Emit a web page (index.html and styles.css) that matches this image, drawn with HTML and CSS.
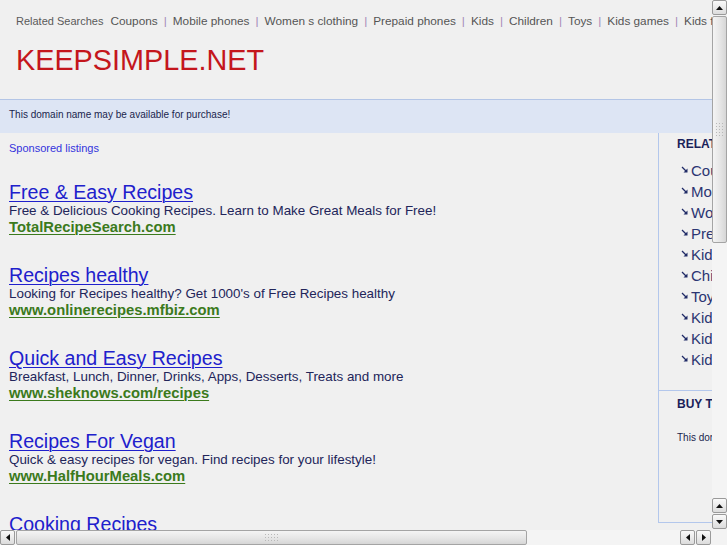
FILE: index.html
```
<!DOCTYPE html>
<html>
<head>
<meta charset="utf-8">
<title>KEEPSIMPLE.NET</title>
<link rel="stylesheet" href="styles.css">
</head>
<body>
<div class="page">
  <div class="topnav">
    <span class="rs">Related Searches</span>
    <a href="#">Coupons</a><span class="sep">|</span>
    <a href="#">Mobile phones</a><span class="sep">|</span>
    <a href="#">Women s clothing</a><span class="sep">|</span>
    <a href="#">Prepaid phones</a><span class="sep">|</span>
    <a href="#">Kids</a><span class="sep">|</span>
    <a href="#">Children</a><span class="sep">|</span>
    <a href="#">Toys</a><span class="sep">|</span>
    <a href="#">Kids games</a><span class="sep">|</span>
    <a href="#">Kids fashion</a>
  </div>
  <div class="logo">KEEPSIMPLE.NET</div>
  <div class="band">This domain name may be available for purchase!</div>
  <div class="main">
    <div class="listings">
      <div class="sponsored">Sponsored listings</div>
      <div class="ad">
        <a class="ad-title" href="#">Free &amp; Easy Recipes</a>
        <div class="ad-desc">Free &amp; Delicious Cooking Recipes. Learn to Make Great Meals for Free!</div>
        <a class="ad-url" href="#">TotalRecipeSearch.com</a>
      </div>
      <div class="ad">
        <a class="ad-title" href="#">Recipes healthy</a>
        <div class="ad-desc">Looking for Recipes healthy? Get 1000's of Free Recipes healthy</div>
        <a class="ad-url" href="#">www.onlinerecipes.mfbiz.com</a>
      </div>
      <div class="ad">
        <a class="ad-title" href="#">Quick and Easy Recipes</a>
        <div class="ad-desc">Breakfast, Lunch, Dinner, Drinks, Apps, Desserts, Treats and more</div>
        <a class="ad-url" href="#">www.sheknows.com/recipes</a>
      </div>
      <div class="ad">
        <a class="ad-title" href="#">Recipes For Vegan</a>
        <div class="ad-desc">Quick &amp; easy recipes for vegan. Find recipes for your lifestyle!</div>
        <a class="ad-url" href="#">www.HalfHourMeals.com</a>
      </div>
      <div class="ad">
        <a class="ad-title" href="#">Cooking Recipes</a>
        <div class="ad-desc">Find Cooking Recipes. Browse thousands of recipes online.</div>
        <a class="ad-url" href="#">www.recipes.com</a>
      </div>
    </div>
    <aside class="side">
      <div class="side-box related">
        <div class="side-h">RELATED SEARCHES</div>
        <ul class="rel-list">
          <li><svg class="arr" width="7" height="7" viewBox="0 0 7 7"><path d="M1 1L5 5" stroke="#1f2a66" stroke-width="1.2"/><path d="M6.5 6.5H2.5L6.5 2.5Z" fill="#1f2a66"/></svg><a href="#">Coupons</a></li>
          <li><svg class="arr" width="7" height="7" viewBox="0 0 7 7"><path d="M1 1L5 5" stroke="#1f2a66" stroke-width="1.2"/><path d="M6.5 6.5H2.5L6.5 2.5Z" fill="#1f2a66"/></svg><a href="#">Mobile phones</a></li>
          <li><svg class="arr" width="7" height="7" viewBox="0 0 7 7"><path d="M1 1L5 5" stroke="#1f2a66" stroke-width="1.2"/><path d="M6.5 6.5H2.5L6.5 2.5Z" fill="#1f2a66"/></svg><a href="#">Women s clothing</a></li>
          <li><svg class="arr" width="7" height="7" viewBox="0 0 7 7"><path d="M1 1L5 5" stroke="#1f2a66" stroke-width="1.2"/><path d="M6.5 6.5H2.5L6.5 2.5Z" fill="#1f2a66"/></svg><a href="#">Prepaid phones</a></li>
          <li><svg class="arr" width="7" height="7" viewBox="0 0 7 7"><path d="M1 1L5 5" stroke="#1f2a66" stroke-width="1.2"/><path d="M6.5 6.5H2.5L6.5 2.5Z" fill="#1f2a66"/></svg><a href="#">Kids</a></li>
          <li><svg class="arr" width="7" height="7" viewBox="0 0 7 7"><path d="M1 1L5 5" stroke="#1f2a66" stroke-width="1.2"/><path d="M6.5 6.5H2.5L6.5 2.5Z" fill="#1f2a66"/></svg><a href="#">Children</a></li>
          <li><svg class="arr" width="7" height="7" viewBox="0 0 7 7"><path d="M1 1L5 5" stroke="#1f2a66" stroke-width="1.2"/><path d="M6.5 6.5H2.5L6.5 2.5Z" fill="#1f2a66"/></svg><a href="#">Toys</a></li>
          <li><svg class="arr" width="7" height="7" viewBox="0 0 7 7"><path d="M1 1L5 5" stroke="#1f2a66" stroke-width="1.2"/><path d="M6.5 6.5H2.5L6.5 2.5Z" fill="#1f2a66"/></svg><a href="#">Kids games</a></li>
          <li><svg class="arr" width="7" height="7" viewBox="0 0 7 7"><path d="M1 1L5 5" stroke="#1f2a66" stroke-width="1.2"/><path d="M6.5 6.5H2.5L6.5 2.5Z" fill="#1f2a66"/></svg><a href="#">Kids fashion</a></li>
          <li><svg class="arr" width="7" height="7" viewBox="0 0 7 7"><path d="M1 1L5 5" stroke="#1f2a66" stroke-width="1.2"/><path d="M6.5 6.5H2.5L6.5 2.5Z" fill="#1f2a66"/></svg><a href="#">Kids toys</a></li>
        </ul>
      </div>
      <div class="side-box buy">
        <div class="side-h">BUY THIS DOMAIN</div>
        <p class="buy-text">This domain may be for sale by its owner!</p>
      </div>
    </aside>
  </div>
</div>

<div class="vscroll">
  <div class="sb-btn"><svg width="7" height="4" viewBox="0 0 7 4"><path d="M0 4L3.5 0L7 4Z" fill="#111"/></svg></div>
  <div class="v-thumb"><span class="grip"></span></div>
  <div class="sb-track"></div>
  <div class="sb-btn"><svg width="7" height="4" viewBox="0 0 7 4"><path d="M0 4L3.5 0L7 4Z" fill="#111"/></svg></div>
  <div class="sb-btn"><svg width="7" height="4" viewBox="0 0 7 4"><path d="M0 0L3.5 4L7 0Z" fill="#111"/></svg></div>
</div>
<div class="hscroll">
  <div class="sb-btn"><svg width="4" height="7" viewBox="0 0 4 7"><path d="M4 0L0 3.5L4 7Z" fill="#111"/></svg></div>
  <div class="h-thumb"><span class="grip"></span></div>
  <div class="sb-track"></div>
  <div class="sb-btn"><svg width="4" height="7" viewBox="0 0 4 7"><path d="M4 0L0 3.5L4 7Z" fill="#111"/></svg></div>
  <div class="sb-btn"><svg width="4" height="7" viewBox="0 0 4 7"><path d="M0 0L4 3.5L0 7Z" fill="#111"/></svg></div>
</div>
<div class="sb-corner"></div>
</body>
</html>
```

FILE: styles.css
```
html, body {
  margin: 0;
  padding: 0;
  overflow: hidden;
  background: #f0f0f0;
}

body {
  font-family: "Liberation Sans", Arial, Helvetica, sans-serif;
  color: #1f2a5e;
}

a {
  text-decoration: none;
}

.page {
  width: 920px;
}

/* top related searches */
.topnav {
  display: flex;
  align-items: baseline;
  white-space: nowrap;
  padding: 13px 0 0 16px;
  height: 17px;
  line-height: 16px;
  font-size: 11.8px;
  color: #5a5a5a;
}

.topnav .rs {
  font-size: 11px;
  color: #5a5a5a;
  margin-right: 7px;
}

.topnav a {
  color: #555;
}

.topnav .sep {
  color: #a58ab8;
  margin: 0 6px;
}

.logo {
  padding: 13px 0 0 16px;
  height: 56px;
  line-height: 34px;
  font-size: 28.8px;
  color: #c4161c;
}

.band {
  border-top: 1px solid #b3c5e6;
  background: #dde5f4;
  height: 33px;
  line-height: 30px;
  padding-left: 9px;
  font-size: 10px;
  color: #1a1f4d;
}

.main {
  display: flex;
  align-items: flex-start;
}

.listings {
  width: 649px;
  padding: 8px 0 0 9px;
  flex: none;
}

.sponsored {
  font-size: 11px;
  line-height: 14px;
  color: #3333dd;
  margin-bottom: 27px;
}

.ad {
  height: 83px;
}

.ad-title {
  display: block;
  width: max-content;
  font-size: 19.6px;
  line-height: 20px;
  color: #2020cc;
  text-decoration: underline;
  text-decoration-thickness: 1px;
  text-underline-offset: 2px;
}

.ad-desc {
  font-size: 13.4px;
  line-height: 17px;
  color: #22255a;
  white-space: nowrap;
}

.ad-url {
  display: block;
  width: max-content;
  font-size: 14.8px;
  line-height: 17px;
  font-weight: bold;
  color: #3b7a1c;
  text-decoration: underline;
  text-decoration-thickness: 1px;
  text-underline-offset: 2px;
}

/* sidebar */
.side {
  width: 240px;
  flex: none;
  border-left: 1px solid #b3c7ec;
  border-bottom: 1px solid #b3c7ec;
}

.side-box {
  padding-left: 18px;
}

.related {
  height: 258px;
  padding-top: 4px;
  border-bottom: 1px solid #b3c7ec;
  box-sizing: border-box;
}

.side-h {
  font-size: 12px;
  line-height: 14px;
  font-weight: bold;
  color: #1a1f5a;
  white-space: nowrap;
}

.rel-list {
  list-style: none;
  margin: 9px 0 0 0;
  padding: 0 0 0 4px;
}

.rel-list li {
  display: flex;
  align-items: center;
  height: 21px;
  white-space: nowrap;
}

.rel-list .arr {
  margin-right: 3px;
  margin-top: -3px;
}

.rel-list a {
  font-size: 15px;
  color: #2b3572;
}

.buy {
  height: 131px;
  padding-top: 6px;
  box-sizing: border-box;
}

.buy-text {
  margin: 21px 0 0 0;
  font-size: 10px;
  line-height: 12px;
  color: #1a1f4d;
  white-space: nowrap;
}

/* scrollbars drawn over the page */
.vscroll, .hscroll {
  position: fixed;
  display: flex;
  background: #f3f3f3;
}

.vscroll {
  top: 0;
  right: 0;
  width: 15px;
  height: 530px;
  flex-direction: column;
}

.hscroll {
  left: 0;
  bottom: 0;
  height: 15px;
  width: 712px;
  flex-direction: row;
}

.sb-corner {
  position: fixed;
  right: 0;
  bottom: 0;
  width: 15px;
  height: 15px;
  background: #f3f3f3;
}

.sb-btn {
  width: 13px;
  height: 13px;
  flex: none;
  margin: 0 0 1px 0;
  border: 1px solid #9a9a9a;
  border-radius: 2px;
  background: linear-gradient(#fafafa, #dcdcdc);
  display: flex;
  align-items: center;
  justify-content: center;
}

.hscroll .sb-btn {
  margin: 0 1px 0 0;
}

.sb-track {
  flex: 1;
  background-color: #f4f4f4;
  background-image: radial-gradient(#e2e2e2 0.6px, transparent 0.7px);
  background-size: 2px 2px;
}

.v-thumb, .h-thumb {
  flex: none;
  box-sizing: border-box;
  border: 1px solid #a4a4a4;
  border-radius: 2px;
  display: flex;
  align-items: center;
  justify-content: center;
}

.v-thumb {
  width: 15px;
  height: 227px;
  background: linear-gradient(90deg, #f4f4f4, #e4e4e4 60%, #d6d6d6);
}

.h-thumb {
  height: 15px;
  width: 511px;
  background: linear-gradient(#f4f4f4, #e4e4e4 60%, #d6d6d6);
}

.grip {
  display: block;
  background-image: radial-gradient(#b8b8b8 0.8px, transparent 1px);
  background-size: 3px 3px;
}

.v-thumb .grip {
  width: 9px;
  height: 15px;
}

.h-thumb .grip {
  width: 15px;
  height: 9px;
}
```
